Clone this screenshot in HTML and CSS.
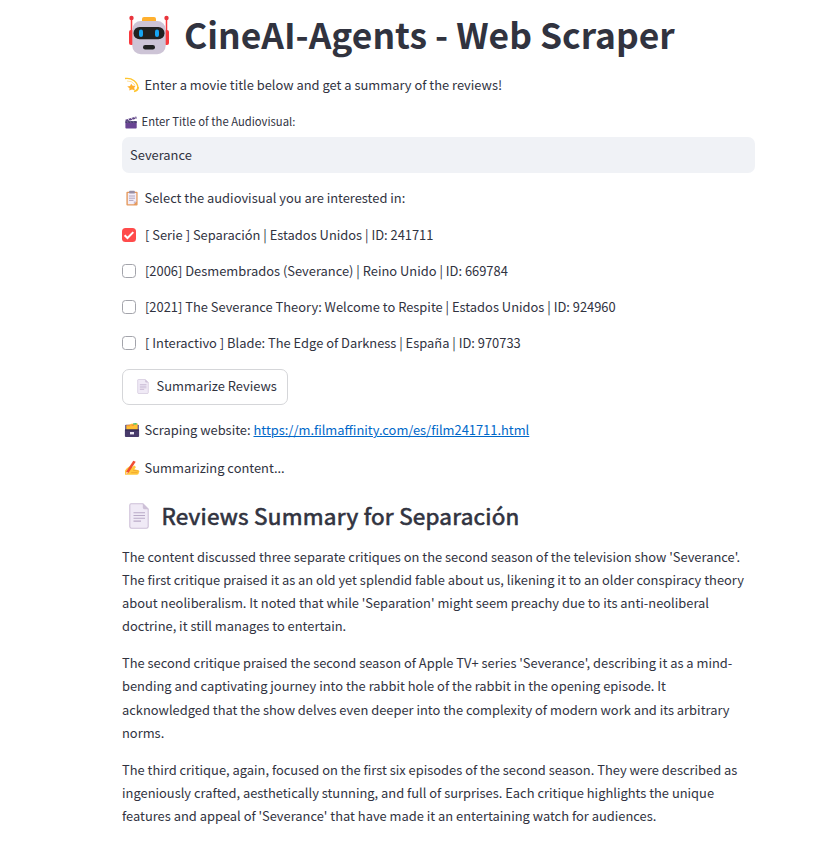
FILE: index.html
```html
<!DOCTYPE html>
<html lang="en">
<head>
<meta charset="utf-8">
<title>CineAI-Agents</title>
<link rel="stylesheet" href="styles.css">
</head>
<body>
<svg class="defs" width="0" height="0" aria-hidden="true">
  <symbol id="page" viewBox="0 0 20 26">
    <path d="M2 .8H14L19.2 6V23.5Q19.2 25.2 17.5 25.2H2.5Q.8 25.2 .8 23.5V2.3Q.8.8 2 .8Z" fill="#f0eaf6" stroke="#cdc0d7" stroke-width="1.1"/>
    <path d="M13.8.8V4.5Q13.8 6.2 15.5 6.2H19.2Z" fill="#cdc0d7"/>
    <path d="M4.5 9.7H16M4.5 12.5H16M4.5 15.3H16M4.5 18.1H12" stroke="#b9aac7" stroke-width="1.1"/>
  </symbol>
</svg>
<main class="app">
  <h1 class="title">
    <svg class="robot" viewBox="0 0 40 40">
      <path d="M2.5 3V18M37.5 3V18" stroke="#f8393e" stroke-width="1.5"/>
      <circle cx="2.5" cy="3" r="2.2" fill="#e9343c"/><circle cx="37.5" cy="3" r="2.2" fill="#e9343c"/>
      <rect x="0" y="15" width="5" height="15" rx="2" fill="#f8393e"/><rect x="35" y="15" width="5" height="15" rx="2" fill="#f8393e"/>
      <rect x="13" y="2" width="14" height="8" rx="2" fill="#ffb02e"/>
      <rect x="3.3" y="6" width="33.4" height="33.3" rx="8.5" fill="#cdc4d6"/>
      <rect x="4.5" y="12" width="31" height="12.3" rx="6.1" fill="#212121"/>
      <rect x="10" y="14.5" width="4" height="7.5" rx="2" fill="#16a5f3"/><rect x="26" y="14.5" width="4" height="7.5" rx="2" fill="#16a5f3"/>
      <rect x="14" y="30" width="12" height="4.5" rx="2.2" fill="#212121"/>
    </svg>
    <span class="title-text">CineAI-Agents - Web Scraper</span>
  </h1>
  <p class="line intro">
    <svg class="emoji" viewBox="0 0 16 16"><path d="M1 1.5C8 .5 14 5 14 11.5" fill="none" stroke="#ffc52e" stroke-width="1.4"/><path d="M3 4Q8 3.5 11 8" fill="none" stroke="#ffe09b" stroke-width="1"/><path d="M7.2 6.7L8.7 8.7L11.6 8.7L10.2 10.7L10.8 13.2L8 12.4L5.3 13.6L5.5 11.2L3.2 9.4L6 8.9Z" fill="#ffb02e"/><path d="M14 10Q14.2 13.4 10 14.5" fill="none" stroke="#ffc52e" stroke-width="1.8"/></svg>
    <span>Enter a movie title below and get a summary of the reviews!</span>
  </p>
  <label class="label" for="t">
    <svg class="emoji-small" viewBox="0 0 12 13"><path d="M.3 3.8L11.2.5L11.8 2.4L.9 5.7Z" fill="#5d4385"/><path d="M3 3L4.3 4.7M6.3 2L7.6 3.7M9.5 1L10.8 2.7" stroke="#e3dbea" stroke-width="1"/><rect x=".4" y="5.2" width="11.3" height="7.3" rx=".8" fill="#694493"/><path d="M.4 5.2H11.7V6.8H.4Z" fill="#433b6b"/><path d="M2 5.3L3 6.7M5 5.3L6 6.7M8 5.3L9 6.7" stroke="#a89cb8" stroke-width=".7"/></svg>
    <span>Enter Title of the Audiovisual:</span>
  </label>
  <div class="input" id="t">Severance</div>
  <p class="line select">
    <svg class="emoji" viewBox="0 0 16 16"><rect x="2.4" y="1.7" width="11.2" height="13.8" rx="1" fill="#e59a5e"/><path d="M3.8 3H12.3V11.5L9.8 14.2H3.8Z" fill="#f3eef8"/><path d="M12.3 11.5H9.8V14.2Z" fill="#c5b8d0"/><rect x="5.2" y=".8" width="5.6" height="2.8" rx=".7" fill="#998ea4"/><path d="M5 6H11M5 8.2H11M5 10.4H9.5" stroke="#aa9bb5" stroke-width=".9"/></svg>
    <span>Select the audiovisual you are interested in:</span>
  </p>
  <div class="options">
    <div class="option"><span class="box checked"><svg viewBox="0 0 14 14"><path d="M2.6 7.2L5.5 10L11.3 4.1" fill="none" stroke="#fff" stroke-width="2"/></svg></span><span>[ Serie ] Separación | Estados Unidos | ID: 241711</span></div>
    <div class="option"><span class="box"></span><span>[2006] Desmembrados (Severance) | Reino Unido | ID: 669784</span></div>
    <div class="option"><span class="box"></span><span>[2021] The Severance Theory: Welcome to Respite | Estados Unidos | ID: 924960</span></div>
    <div class="option"><span class="box"></span><span>[ Interactivo ] Blade: The Edge of Darkness | España | ID: 970733</span></div>
  </div>
  <button class="button"><svg class="button-icon"><use href="#page"/></svg><span>Summarize Reviews</span></button>
  <p class="line scraping">
    <svg class="emoji" viewBox="0 0 16 16"><rect x="1.2" y="2.7" width="13.6" height="6" rx=".8" fill="#51447d"/><path d="M2.3 3.2L6 2.5L7 1.8L13.7 1.5V8H2.3Z" fill="#ffc033"/><path d="M9 1.5L12.6 1V2.4H9Z" fill="#32c47c"/><path d="M3 3.7H6.3M7.5 3.2H10" stroke="#ef8540"/><rect x=".9" y="7.5" width="14.2" height="7.4" rx="1" fill="#483b6b"/><path d="M1 8H15" stroke="#2f294d"/><rect x="6" y="10" width="4" height="2.4" fill="#eee9f6"/></svg>
    <span>Scraping website: <a href="#">https://m.filmaffinity.com/es/film241711.html</a></span>
  </p>
  <p class="line summarizing">
    <svg class="emoji" viewBox="0 0 16 16"><path d="M1 14.7V10.5Q2.4 7.6 5.3 6.4L7 5.4L8 7.5L10.2 5.5L12 7L10.3 9.2L14.5 10.3Q16.2 11.5 14.8 12.7Q15 14.3 13 14.8Z" fill="#ffc83d"/><path d="M9 10.2L14.5 11.1M7.2 12.6H13.5" stroke="#ed9d2b" stroke-width=".7"/><path d="M9.3.8L11.7 1.8L4.6 12.7L2 14.3L2.3 11.5Z" fill="#f04d32"/><path d="M2.3 11.7L4.4 12.8L2 14.3Z" fill="#ffe1bc"/></svg>
    <span>Summarizing content...</span>
  </p>
  <h2 class="heading"><svg class="heading-icon"><use href="#page"/></svg><span>Reviews Summary for Separación</span></h2>
  <article class="summary">
    <p>The content discussed three separate critiques on the second season of the television show 'Severance'.<br>The first critique praised it as an old yet splendid fable about us, likening it to an older conspiracy theory<br>about neoliberalism. It noted that while 'Separation' might seem preachy due to its anti-neoliberal<br>doctrine, it still manages to entertain.</p>
    <p>The second critique praised the second season of Apple TV+ series 'Severance', describing it as a mind-<br>bending and captivating journey into the rabbit hole of the rabbit in the opening episode. It<br>acknowledged that the show delves even deeper into the complexity of modern work and its arbitrary<br>norms.</p>
    <p>The third critique, again, focused on the first six episodes of the second season. They were described as<br>ingeniously crafted, aesthetically stunning, and full of surprises. Each critique highlights the unique<br>features and appeal of 'Severance' that have made it an entertaining watch for audiences.</p>
  </article>
</main>
</body>
</html>
```
FILE: styles.css
```css
* { box-sizing: border-box; }
body {
  margin: 0;
  background: #fff;
  color: #31333f;
  font: 400 12.9px/23.04px "Noto Sans CJK SC", "Noto Sans", sans-serif;
  white-space: nowrap;
}
h1, h2, p { margin: 0; }
.defs { display: block; }
.app { width: 633px; margin-left: 122px; padding-top: 11px; display: flex; flex-direction: column; }
.title { display: flex; align-items: center; height: 48px; font-size: 35.4px; line-height: 48px; font-weight: 700; }
.title-text { margin-bottom: 2px; }
.robot { width: 40px; height: 40px; margin: 0 15px 0 7px; flex: none; }
.line { display: flex; align-items: center; height: 23px; }
.intro { margin-top: 14px; }
.emoji { width: 16px; height: 16px; margin: 0 5px 0 1.5px; flex: none; }
.label { display: flex; align-items: center; height: 22px; margin-top: 15px; font-size: 11.27px; }
.emoji-small { width: 12px; height: 13px; margin: 0 4.5px 0 3px; flex: none; }
.input { height: 36px; margin-top: 4px; padding: 0 8px; border-radius: 7px; background: #f0f2f6; line-height: 36px; }
.select { margin-top: 13px; }
.options { margin-top: 14px; display: grid; gap: 13px; }
.option { display: flex; align-items: center; height: 23px; gap: 9px; }
.box { width: 14px; height: 14px; border: 1px solid #a3a4ab; border-radius: 3.5px; flex: none; }
.box.checked { border: 0; background: #ff4b4b; }
.box svg { display: block; }
.button { display: flex; align-items: center; width: 166px; height: 36px; margin-top: 15px; padding: 0 0 2px 14px; border: 1px solid #d5d6d9; border-radius: 7px; background: #fff; color: inherit; font: inherit; }
.button-icon { width: 12px; height: 15px; margin-right: 7.5px; flex: none; }
.button-icon, .heading-icon { overflow: visible; }
.scraping { margin-top: 13px; }
.scraping a { color: #0068c9; text-decoration: underline; }
.summarizing { margin-top: 15px; }
.heading { display: flex; align-items: center; height: 30px; margin-top: 21px; font-size: 22.5px; line-height: 30px; font-weight: 400; letter-spacing: .25px; -webkit-text-stroke: .65px #31333f; }
.heading-icon { width: 20px; height: 26px; margin: 1px 12.4px 0 7px; flex: none; }
.summary { display: grid; gap: 14.4px; margin-top: 14.83px; }
```
